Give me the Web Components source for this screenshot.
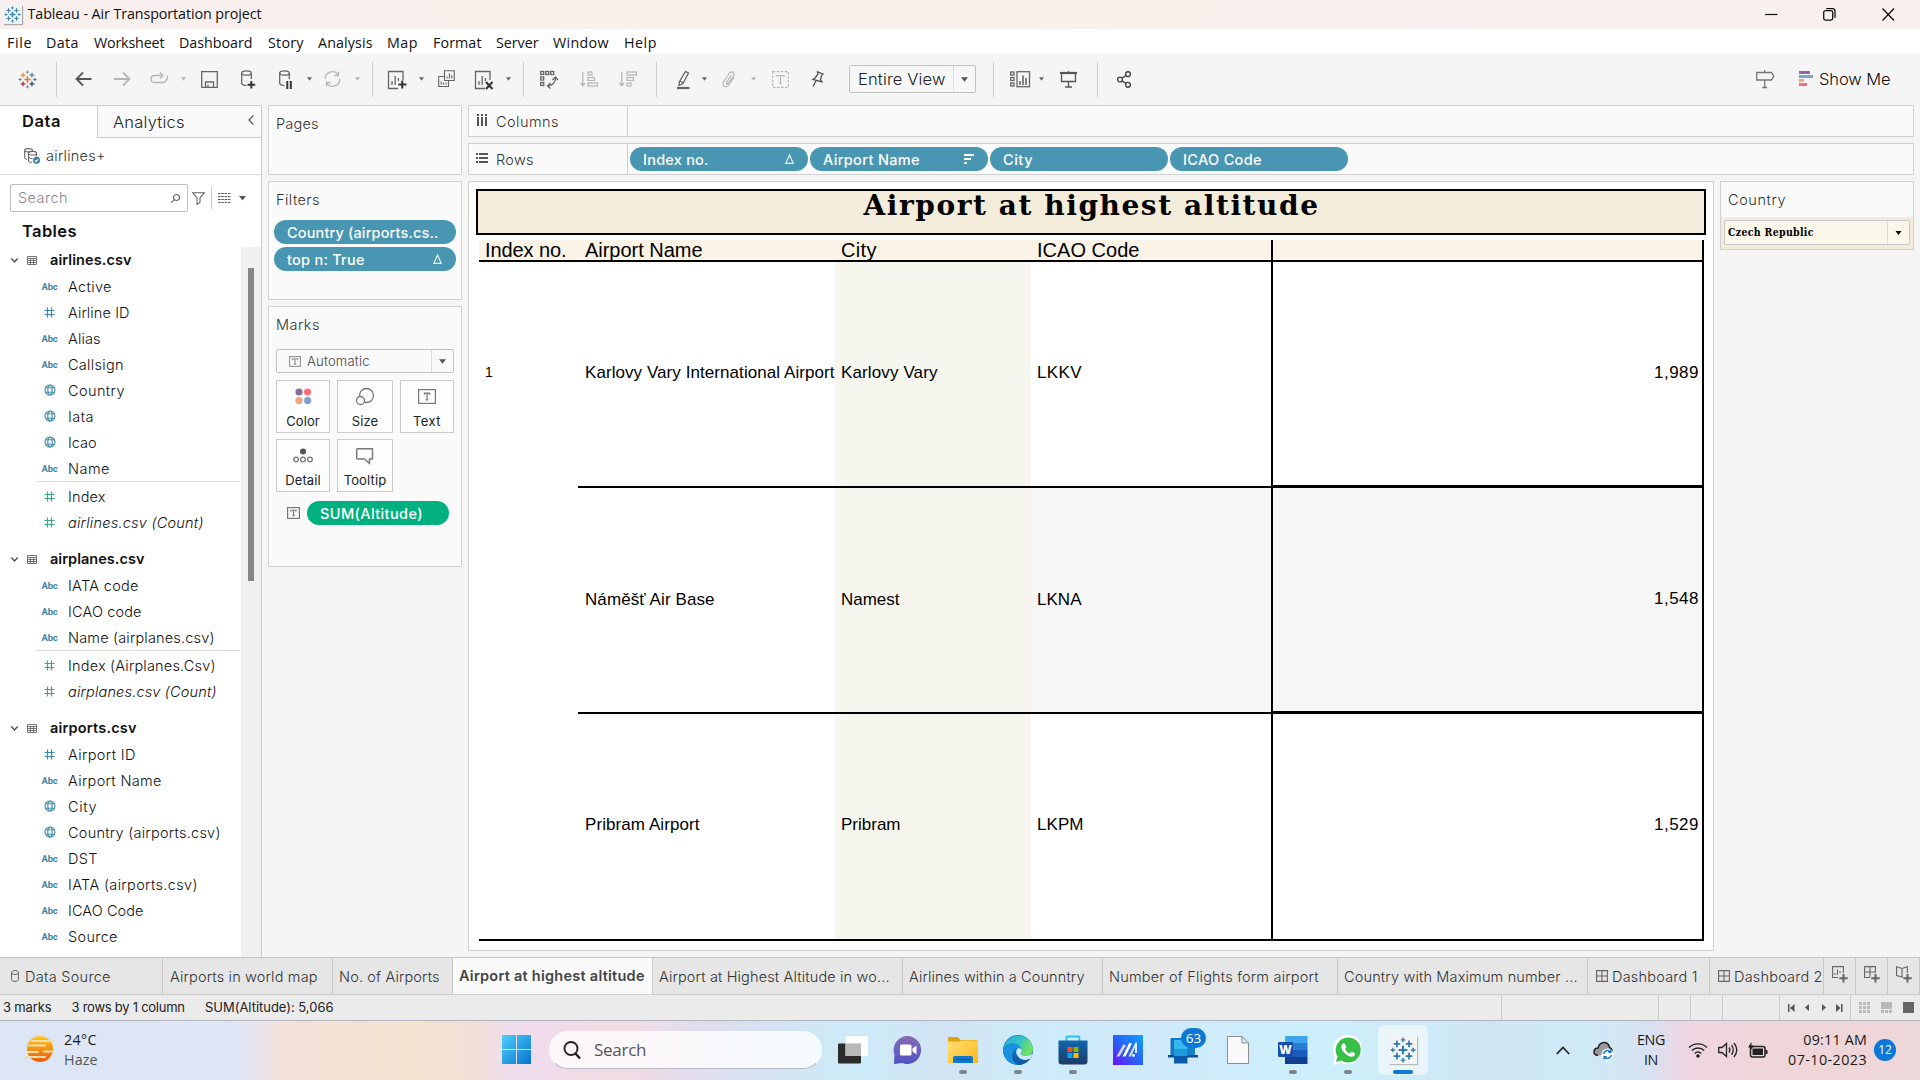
<!DOCTYPE html>
<html lang="en">
<head>
<meta charset="utf-8">
<title>Tableau - Air Transportation project</title>
<style>
html,body{margin:0;padding:0}
body{width:1920px;height:1080px;overflow:hidden;background:#f5f5f5;font-family:Inter,Roboto,"Liberation Sans",sans-serif;color:#222}
</style>
</head>
<body>
<tableau-desktop></tableau-desktop>
<script>
const BASE = `*{box-sizing:border-box}svg{display:block;overflow:visible;flex:none}.row{display:flex;align-items:center}.row>*{flex:none}`;
class UI extends HTMLElement {
  connectedCallback(){
    if(this.shadowRoot) return;
    this.attachShadow({mode:'open'}).innerHTML = `<style>${BASE}${this.css?this.css():''}</style>${this.html()}`;
    if(this.after) this.after();
  }
  a(n,d=''){return this.getAttribute(n)??d}
}
const def=(n,c)=>customElements.define(n,c);

/* A run of text whose tracking is tuned so that it takes up a given width. */
def('fit-text', class extends UI{
  css(){return `:host{display:block;white-space:nowrap;line-height:20px}span{display:inline-block}`}
  html(){return `<span><slot></slot></span>`}
  after(){
    const w=+this.a('w'); if(!w) return;
    const s=this.shadowRoot.querySelector('span'), n=this.textContent.length;
    const nat=s.getBoundingClientRect().width;
    if(nat && n>1) s.style.letterSpacing=((w+1.5-nat)/(n-1)).toFixed(3)+'px';
  }
});
const T=(t,w,st='')=>`<fit-text w="${w}" style="${st}">${t}</fit-text>`;
/* Items are [left edge, width, markup]; each one follows the last in a flex row. */
const flow=(items,start=0)=>{let p=start;return items.map(([x,w,h])=>{const m=x-p;p=x+w;return `<div style="margin-left:${m}px;width:${w}px">${h}</div>`}).join('')};
const svg=(w,h,b,s='#666',sw=1.3)=>`<svg width="${w}" height="${h}" viewBox="0 0 ${w} ${h}" fill="none" stroke="${s}" stroke-width="${sw}">${b}</svg>`;
const plus=(x,y,r,c,sw)=>`<path d="M${x-r} ${y}H${x+r}M${x} ${y-r}V${y+r}" stroke="${c}" stroke-width="${sw}"/>`;
const logo=(s,mono)=>{const c=k=>mono||k;return `<svg width="${s}" height="${s}" viewBox="-9 -9 18 18" fill="none">`+
  plus(0,0,3,c('#e8762d'),1.5)+plus(-4.2,-4.2,2.3,c('#eb912c'),1.2)+plus(4.2,-4.2,2.3,c('#59879b'),1.2)+plus(-4.2,4.2,2.3,c('#c72037'),1.2)+plus(4.2,4.2,2.3,c('#1f447e'),1.2)+
  plus(0,-7,1.6,c('#7199a6'),.9)+plus(0,7,1.6,c('#7a87b0'),.9)+plus(-7,0,1.6,c('#59879b'),.9)+plus(7,0,1.6,c('#5b6591'),.9)+`</svg>`};
const caret=(c='#666',w=6,h=4)=>`<svg width="${w}" height="${h}" viewBox="0 0 6 4"><path d="M0 0H6L3 4Z" fill="${c}"/></svg>`;

def('title-bar', class extends UI{
  css(){return `:host{display:flex;align-items:center;height:29px;background:linear-gradient(90deg,#f8efee 0,#f9f0ee 260px,#faf0ea 45%,#f9f0ee 70%,#f9efee);font-family:"Open Sans",sans-serif;font-size:14.3px;color:#111}.i{width:19px;height:19px;background:#eff3f5;box-shadow:1px 1px 1px #aaa;display:grid;place-items:center}fit-text{margin-top:-1px}`}
  html(){return flow([[3,19,`<div class="i">${logo(17,'#3b85b0')}</div>`],[27.5,240,T('Tableau - Air Transportation project',232.5)],
  [1765,13,svg(13,12,`<path d="M0 5.5H12.5"/>`,'#111',1.2)],
  [1823,13,svg(13,13,`<rect x=".7" y="2.7" width="9" height="9.4" rx="1.8"/><path d="M3.2 .7H9.5Q12 .7 12 3.2V9.8"/>`,'#111',1.3)],
  [1882,12,svg(13,13,`<path d="M.5 .5L12 12.5M12 .5L.5 12.5"/>`,'#111',1.3)]])}
});
def('menu-bar', class extends UI{
  css(){return `:host{display:flex;align-items:center;height:25px;padding-top:2px;background:#fff;font-family:"Open Sans",sans-serif;font-size:14.3px;color:#111}`}
  html(){return flow([['File',8,31],['Data',47,78],['Worksheet',95,164],['Dashboard',180,252],['Story',269,303],['Analysis',319,372],['Map',388,417],['Format',434,481],['Server',497,538],['Window',554,608],['Help',625,656]].map(([t,a,b])=>[a-1,b-a+2,T(t,b-a)]))}
});
const sheetAdd=(x)=>`<path d="M11 18.5H1.5V1.5H16V10"/><path d="M5 15V11M8.2 15V6M11.4 11V8"/>`;
def('tool-bar', class extends UI{
  css(){return `:host{display:flex;align-items:center;height:51px;padding-bottom:1px;background:#f5f5f5}.s{width:1px;height:35px;background:#ccc}.combo{display:flex;height:28px;border:1px solid #c2c2c2;border-radius:2px;background:#f7f7f7;align-items:center;font-size:16.500px;font-weight:300;color:#222}.combo fit-text{width:104px;padding:1px 0 0 8px;border-right:1px solid #ddd;line-height:25px}.combo svg{margin-left:7px}`}
  html(){const S='<div class="s"></div>',L='#b5b5b5';
  return flow([
  [18,19,logo(19)],[56,1,S],
  [75,17,svg(17,16,`<path d="M16.5 8H1.5M8 1.5L1.5 8L8 14.5"/>`,'#555',1.8)],
  [113.500,17,svg(17,16,`<path d="M0 8H15.5M9 1.5L15.5 8L9 14.5"/>`,L,1.8)],
  [150,18,svg(18,14,`<path d="M12 10.5H4.5Q1 10.5 1 7T4.500 3.5H12.500M17.500 3.500Q17.500 10.500 12 10.500M10 .5L13 3.500L10 6.500"/>`,L)],
  [181,5,caret(L,5,4)],
  [201,17,svg(17,17,`<path d="M.7 .7H16.3V16.3H.7Z"/><path d="M4.500 16V11H12.500V16M7 16V13.500"/>`)],
  [241,15,svg(15,19,`<ellipse cx="5.500" cy="3" rx="4.800" ry="2.200"/><path d="M.7 3V13.500Q1.500 15.500 5.500 15.700M10.300 3V9"/><path d="M10.300 11V18.500M6.500 14.700H14.200" stroke="#333" stroke-width="2"/>`)],
  [279,13,svg(13,19,`<ellipse cx="5.500" cy="3" rx="4.800" ry="2.200"/><path d="M.7 3V13.500Q1.500 15.500 5.500 15.700M10.300 3V9"/><path d="M8.300 11V19M11.800 11V19" stroke="#333" stroke-width="2"/>`)],
  [307,5,caret('#666',5,4)],
  [324,17,svg(17,16,`<path d="M1.200 8A7 7 0 0 1 14.200 4.200M15.800 8A7 7 0 0 1 2.800 11.800M14.500 .5V4.500H10.500M2.500 15.500V11.500H6.500"/>`,L)],
  [355,5,caret(L,5,4)],[372,1,S],
  [387,20,svg(20,19,sheetAdd()+`<path d="M15.300 10.500V18.500M11.300 14.500H19.500" stroke="#333" stroke-width="2"/>`)],
  [419,5,caret('#666',5,4)],
  [438,17,svg(17,18,`<path d="M6.500 .7H16.300V10.500H6.500Z"/><path d="M6 6.500H.7V16.500H10.500V11"/><path d="M9 8.500V6.500M11.400 8.500V3.500M13.800 8.500V5M3.200 14.500V11.500M5.500 14.500V12.500M8 14.500V12.500"/>`,'#666',1.1)],
  [474,20,svg(20,19,sheetAdd()+`<path d="M12 12L18.500 19M18.500 12L12 19" stroke="#333" stroke-width="2"/>`)],
  [506,5,caret('#666',5,4)],[523,1,S],
  [540,18,svg(18,19,`<rect x=".7" y="1.500" width="3" height="3"/><rect x="5.700" y="1.500" width="3" height="3"/><rect x="10.700" y="1.500" width="3" height="3"/><rect x=".7" y="7" width="3" height="3"/><rect x=".7" y="12.500" width="3" height="3"/><path d="M7.500 16Q15.500 15 15.500 8M12.500 10L15.500 7L18 10M10.500 13L7.500 16L10.500 18.500"/>`)],
  [580,18,svg(18,16,`<path d="M2.800 1V14.500M.5 12L2.800 14.700L5 12"/><rect x="8" y="1" width="4" height="3"/><rect x="8" y="6.500" width="6.500" height="3"/><rect x="8" y="12" width="9.500" height="3"/>`,L,1.2)],
  [619,18,svg(18,16,`<path d="M2.800 1V14.500M.5 12L2.800 14.700L5 12"/><rect x="8" y="1" width="9.500" height="3"/><rect x="8" y="6.500" width="6.500" height="3"/><rect x="8" y="12" width="4" height="3"/>`,L,1.2)],
  [656,1,S],
  [677,13,svg(13,19,`<path d="M8.500 1.500L11.500 3L6 13.500L2 15.500L2.500 11.500ZM3 11L6.500 13"/><path d="M0 18H12.500" stroke-width="2.200"/>`)],
  [702,5,caret('#666',5,4)],
  [722,14,svg(14,17,`<path d="M9.500 4L4.500 11.500Q4 13.500 5.500 13.300L11.500 5Q13 1.500 10 .8Q8.500 .6 7.500 2L1.500 11Q0 15 3.500 16Q5.500 16 6.500 14.500L12 6.500"/>`,L,1.2)],
  [751,5,caret(L,5,4)],
  [772,17,svg(17,17,`<rect x=".7" y=".7" width="15.600" height="15.600" stroke-dasharray="2.500 1.500"/><path d="M5 6V4.500H12V6M8.500 4.500V12.500M7 12.500H10"/>`,L,1.200)],
  [811,13,svg(13,17,`<path d="M6.500 .8L12 3L10.500 4.500L9.500 8.500L11 11L2 8.500L4.500 6.500L7 3ZM5 9.800L2 15.500"/>`,'#555')],
  [849,127,`<div class="combo">${T('Entire View',86)}${caret('#555',7,5)}</div>`],
  [993,1,S],
  [1010,20,svg(20,17,`<rect x=".7" y="1" width="3.300" height="3"/><rect x=".7" y="6.500" width="3.300" height="3"/><rect x=".7" y="12" width="3.300" height="3"/><rect x="7" y=".7" width="12.500" height="15"/><path d="M10 14V10M13 14V4.500M16 14V7" stroke-width="1.600"/>`)],
  [1039,5,caret('#666',5,4)],
  [1060,17,svg(17,17,`<path d="M0 2H17" stroke-width="2.200"/><path d="M1.500 2V10.500H15.500V2M8.500 0V2M8.500 10.500V16M5 16H12"/>`,'#555')],
  [1097,1,S],
  [1117,15,svg(15,17,`<circle cx="3" cy="8.500" r="2.400"/><circle cx="11" cy="3.200" r="2.400"/><circle cx="11" cy="13.800" r="2.400"/><path d="M5.200 7L8.900 4.600M5.200 10L8.900 12.300"/>`,'#444',1.4)],
  [1756,19,svg(19,18,`<path d="M.7 2.500H15.500L17.800 6.200L15.500 10H.7ZM8.700 0V2.500M8.700 10V17.500M6.200 17.500H11.200"/>`,'#777')],
  [1799,14,`<svg width="14" height="16"><path fill="#8a6d9a" d="M0 0H11V3H0Z"/><path fill="#7ba6d0" d="M0 4H14V7H0Z"/><path fill="#f0a582" d="M0 8H5V11H0Z"/><path fill="#f5707c" d="M0 12H8V15H0Z"/></svg>`],
  [1819,76,T('Show Me',70,'font-size:16.500px;font-weight:300;color:#111')]])}
});

const ICON={
  abc:`<span style="font:700 9.500px Roboto;color:#3f85a4;letter-spacing:-.2px">Abc</span>`,
  num:c=>svg(11,11,`<path d="M3.500 .5V10.500M7.500 .5V10.500M.5 3.500H10.500M.5 7.500H10.500"/>`,c,1.2),
  geo:svg(12,12,`<circle cx="6" cy="6" r="5"/><ellipse cx="6" cy="6" rx="2.200" ry="5"/><path d="M1.500 3.800H10.500M1.500 8.200H10.500"/>`,'#3f8aa8',1.1)};
def('data-field', class extends UI{
  css(){return `:host{display:flex;align-items:center;height:26px;font-size:14.500px;font-weight:300;color:#111}.i{width:27px;margin-left:36px;display:grid;place-items:center}fit-text{margin-left:5px;line-height:26px;padding-top:1px}:host([count]) fit-text{font-style:italic}`}
  html(){const k=this.a('kind');return `<div class="i">${k=='abc'?ICON.abc:k=='geo'?ICON.geo:ICON.num(k=='num'?'#3f8aa8':'#3fa58c')}</div>${T(this.a('name'),this.a('w'))}`}
});
def('data-table', class extends UI{
  css(){return `:host{display:block;margin-bottom:10px}.h{display:flex;align-items:center;height:26px;font-size:14.500px;font-weight:600;color:#111;padding-left:11px}hr{margin:0 0 1px 36px;border:0;height:1px;background:#dcdcdc}.ms{padding-bottom:1px}`}
  html(){const d=TABLES[+this.a('i')];const f=([k,n,w,c])=>`<data-field kind="${k}" name="${n}" w="${w}" ${c?'count':''}></data-field>`;
  return `<div class="h">${svg(7,5,`<path d="M.3 .5L3.500 4L6.700 .5"/>`,'#555',1.500)}<div style="width:9px"></div>${svg(10,9,`<path d="M.5 .5H9.500V8.500H.5ZM.5 2.500H9.500M.5 4.500H9.500M.5 6.500H9.500M3.500 2.500V8.500M6.500 2.500V8.500"/>`,'#666',.9)}<div style="width:13px"></div>${T(d.n,d.w)}</div>${d.f.map(f).join('')}${d.m?'<hr><div class="ms">'+d.m.map(f).join('')+'</div>':''}`}
});
const TABLES=[
 {n:'airlines.csv',w:80,f:[['abc','Active',42],['num','Airline ID',60],['abc','Alias',31],['abc','Callsign',54],['geo','Country',55],['geo','Iata',24],['geo','Icao',27],['abc','Name',40]],m:[['meas','Index',36],['meas','airlines.csv (Count)',134,1]]},
 {n:'airplanes.csv',w:93,f:[['abc','IATA code',69],['abc','ICAO code',72],['abc','Name (airplanes.csv)',145]],m:[['meas','Index (Airplanes.Csv)',146],['meas','airplanes.csv (Count)',147,1]]},
 {n:'airports.csv',w:85,f:[['num','Airport ID',66],['abc','Airport Name',92],['geo','City',27],['geo','Country (airports.csv)',151],['abc','DST',28],['abc','IATA (airports.csv)',128],['abc','ICAO Code',74],['abc','Source',48]]}];
def('data-pane', class extends UI{
  css(){return `:host{display:flex;flex-direction:column;width:262px;height:852px;background:#fff;border-top:1px solid #ccc;border-right:1px solid #ccc}
  .tabs{display:flex;height:32px;font-size:16.500px}.d{width:97px;padding:5px 0 0 22px;font-weight:600;color:#111}.an{flex:1;display:flex;border-left:1px solid #ccc;border-bottom:1px solid #ccc;background:#fafafa;padding:6px 7px 0 15px;justify-content:space-between;color:#222;font-weight:300}.an svg{margin-top:3px}
  .src{display:flex;align-items:center;height:37px;border-bottom:1px solid #dcdcdc;padding-left:24px;gap:6px;font-size:14.500px;font-weight:300;color:#333}
  .sr{display:flex;align-items:center;padding:9px 0 0 10px}.box{width:178px;height:28px;border:1px solid #bdbdbd;border-radius:2px;display:flex;align-items:center;justify-content:space-between;padding:0 7px;font-size:14.500px;font-weight:300;color:#888}
  .tb{font-size:16.500px;font-weight:600;color:#111;padding:9px 0 6px 22px;height:35px;margin-top:0}
  .list{display:flex;flex:1;overflow:hidden}.items{width:241px;}.track{width:20px;background:#f0f0f0;padding-top:21px}.th{width:6px;height:313px;margin-left:7px;background:#868686}data-table{width:240px}`}
  html(){return `<div class="tabs"><div class="d">${T('Data',37)}</div><div class="an">${T('Analytics',70)}${svg(6,10,`<path d="M5.500 .5L1 5L5.500 9.500"/>`,'#555',1.300)}</div></div>
  <div class="src">${svg(16,16,`<path d="M3 11.500Q.7 11 .7 9.500V2.500M8.500 2.500V3.500"/><ellipse cx="4.600" cy="2.300" rx="3.900" ry="1.700"/><ellipse cx="8.500" cy="5.200" rx="4" ry="1.800"/><path d="M4.500 5.200V13Q5.500 14.500 8 14.500M12.500 5.200V8.500M4.500 9Q6 10.700 8.500 10.700"/><circle cx="12.500" cy="12.300" r="3.500" fill="#3a7fa3" stroke="none"/><path d="M10.800 12.300L12.100 13.500L14.200 11.300" stroke="#fff"/>`,'#666',1.100)}${T('airlines+',58)}</div>
  <div class="sr"><div class="box">${T('Search',48)}${svg(9,9,`<circle cx="5.500" cy="3.500" r="3"/><path d="M3.300 5.700L.3 8.700"/>`,'#666',1.200)}</div>
  ${flow([[192,13,svg(13,13,`<path d="M.7 .7H12.300L8 6V10.500L5 12.300V6Z"/>`,'#666',1.100)],[211,1,'<div style="height:22px;background:#ccc"></div>'],[218,13,svg(13,10,`<path d="M0 .5H12.500M0 3.500H12.500M0 6.500H12.500M0 9.500H12.500" stroke-dasharray="2.500 .8"/>`,'#555',1.200)],[239,7,caret('#555',7,4.500)]],188)}</div>
  <div class="tb">${T('Tables',53)}</div>
  <div class="list"><div class="items">${[0,1,2].map(i=>`<data-table i="${i}"></data-table>`).join('')}</div><div class="track"><div class="th"></div></div></div>`}
});

const DELTA=svg(9,10,`<path d="M4.500 1L8.200 9.300H.8Z"/>`,'#e6f1f5',1.200);
def('field-pill', class extends UI{
  css(){return `:host{display:flex;align-items:center;justify-content:space-between;height:24px;border-radius:12px;background:var(--pill,#4996b2);color:#fff;font-size:14.500px;font-weight:500;padding:0 14px 0 13px}fit-text{line-height:24px;padding-top:1px}`}
  html(){return T(this.a('label'),this.a('w'))+(this.a('mark')=='delta'?DELTA:this.a('mark')=='sort'?`<svg width="10" height="10"><path fill="#fff" d="M0 0H10V2H0ZM0 4H7V6H0ZM0 8H3V10H0Z"/></svg>`:'')}
});
def('side-card', class extends UI{
  css(){return `:host{display:block;width:194px;border:1px solid #d0d0d0;background:#fafafa}h3{margin:0;padding:8px 0 0 7px;font-size:14.500px;font-weight:300;color:#333}`}
  html(){return `<h3>${T(this.a('title'),this.a('w'))}</h3><slot></slot>`}
});
const TBOX=(w,h,c='#777')=>svg(w,h,`<rect x=".6" y=".6" width="${w-1.2}" height="${h-1.2}"/><path d="M${w/2-2.600} ${h*.38}V${h*.27}H${w/2+2.600}V${h*.38}M${w/2} ${h*.27}V${h*.73}M${w/2-1.300} ${h*.73}H${w/2+1.300}"/>`,c,1.200);
def('mark-button', class extends UI{
  css(){return `:host{display:flex;flex-direction:column;align-items:center;height:53px;border:1px solid #ccc;background:#fdfdfd;font-size:13px;font-weight:400;color:#222}.i{height:30px;display:grid;place-items:center;padding-top:1px}`}
  html(){return `<div class="i"><slot></slot></div>${T(this.a('label'),this.a('w'))}`}
});
def('cards-column', class extends UI{
  css(){return `:host{display:flex;flex-direction:column;gap:6px;width:194px}.p{display:grid;gap:3px;margin:10px 5px 0 5px}.combo{display:flex;align-items:center;margin:14px 7px 7px;height:24px;border:1px solid #c4c4c4;border-radius:2px;font-size:13px;color:#444;font-weight:300;padding-left:12px;gap:6px}.combo fit-text{flex:1}.combo .c{width:22px;height:22px;border-left:1px solid #ddd;display:grid;place-items:center}.g{display:grid;grid-template-columns:54px 56px 54px;gap:6px 7px;margin-left:7px}.s{display:flex;align-items:center;gap:7px;margin:9px 0 0 18px}.s field-pill{width:142px;--pill:#00b180}`}
  html(){return `<side-card title="Pages" w="41" style="height:70px"></side-card>
  <side-card title="Filters" w="42" style="height:119px"><div class="p"><field-pill label="Country (airports.cs.." w="150"></field-pill><field-pill label="top n: True" w="76" mark="delta"></field-pill></div></side-card>
  <side-card title="Marks" w="42" style="height:261px"><div class="combo">${TBOX(12,11,'#999')}${T('Automatic',61)}<div class="c">${caret('#555',7,5)}</div></div>
  <div class="g">
  <mark-button label="Color" w="32"><svg width="17" height="17"><circle cx="4" cy="4" r="3.600" fill="#8a6d9a"/><circle cx="12.600" cy="4" r="3.600" fill="#f9707e"/><circle cx="4" cy="12.600" r="3.600" fill="#f2a57c"/><circle cx="12.600" cy="12.600" r="3.600" fill="#7ba2cc"/></svg></mark-button>
  <mark-button label="Size" w="25">${svg(18,17,`<circle cx="10.500" cy="7.500" r="7"/><circle cx="4.500" cy="12.500" r="4" fill="#fdfdfd"/>`,'#777')}</mark-button>
  <mark-button label="Text" w="26">${TBOX(18,15)}</mark-button>
  <mark-button label="Detail" w="34">${svg(20,15,`<circle cx="10" cy="3.500" r="3" fill="#555" stroke="none"/><circle cx="3" cy="11.500" r="2.300"/><circle cx="10" cy="11.500" r="2.300"/><circle cx="17" cy="11.500" r="2.300"/>`,'#777')}</mark-button>
  <mark-button label="Tooltip" w="41">${svg(18,16,`<path d="M1.500 .7H16.500V11H13.500V15.500L8.500 11H1.500Q.7 11 .7 10V1.500Q.7 .7 1.500 .7Z"/>`,'#777',1.400)}</mark-button></div>
  <div class="s">${TBOX(13,12)}<field-pill label="SUM(Altitude)" w="101"></field-pill></div></side-card>`}
});
def('field-shelf', class extends UI{
  css(){return `:host{display:flex;align-items:center;height:32px;width:1446px;border:1px solid #d0d0d0;background:#fafafa;font-size:14.500px;font-weight:300;color:#333}.l{width:159px;height:30px;display:flex;align-items:center;padding-left:7px;gap:8px;border-right:1px solid #d0d0d0;padding-top:2px}.l svg{margin-top:-5px}::slotted(field-pill){width:178px}.p{display:flex;gap:2px;padding-left:2px}`}
  html(){const c=this.a('kind')=='c';return `<div class="l">${c?`<svg width="12" height="12"><path fill="#555" d="M1 0H3V2H1ZM5 0H7V2H5ZM9 0H11V2H9ZM1 3H3V12H1ZM5 3H7V12H5ZM9 3H11V12H9Z"/></svg>`:`<svg width="12" height="10"><path fill="#555" d="M0 0H2V2H0ZM0 4H2V6H0ZM0 8H2V10H0ZM3 0H12V2H3ZM3 4H12V6H3ZM3 8H12V10H3Z"/></svg>`}${T(c?'Columns':'Rows',c?61:36)}</div><div class="p"><slot></slot></div>`}
});
def('crosstab-view', class extends UI{
  css(){return `:host{display:flex;flex-direction:column;width:1246px;height:770px;border:1px solid #d0d0d0;background:#fff;padding:7px 0 0 7px;font-family:"Liberation Sans",Arial,sans-serif;color:#000}
  .t{width:1230px;height:46px;border:2px solid #000;background:#f4ecda;display:flex;justify-content:center;font:700 28px "DejaVu Serif",serif}.t fit-text{line-height:28px;margin:1px 0 0 1px}
  .g{margin:5px 0 0 3px;width:1225px;display:grid;grid-template-columns:99px 257px 196px 240px 433px;grid-template-rows:22px 226px 226px 227px;font-size:17px}
  .g>div{display:flex;align-items:flex-start;padding:101px 0 0 6px;border-bottom:2px solid #000}.g>.nm{padding-left:7px}.g>.b2{padding-top:102px}
  .g>.h{background:#faf3e6;font-size:20px;padding-top:0;padding-bottom:0;align-items:flex-end}.g>.h fit-text{line-height:20px}
  .g>.v{justify-content:flex-end;border-left:2px solid #000;border-right:2px solid #000;padding-left:0;padding-right:3px;border-bottom-width:3px}
  .g>.h.v{border-bottom-width:2px}.g>.last{border-bottom-width:2px}.city{background:#f6f6ee}.b{background:#f6f6f7}.g>.idx{grid-row:2/5;padding-top:102px;font-size:14px}`}
  html(){const r=(n,wn,c,wc,i,wi,v,k)=>{const p=k=='b'?'b2':'';return `<div class="nm ${p}">${T(n,wn)}</div><div class="city ${p}">${T(c,wc)}</div><div class="${k} ${p}">${T(i,wi)}</div><div class="v ${k}">${T(v,43)}</div>`};
  return `<div class="t">${T('Airport at highest altitude',453)}</div><div class="g">
  <div class="h">${T('Index no.',80)}</div><div class="h nm">${T('Airport Name',116)}</div><div class="h">${T('City',34)}</div><div class="h">${T('ICAO Code',101)}</div><div class="h v"></div>
  <div class="idx">1</div>
  ${r('Karlovy Vary International Airport',248,'Karlovy Vary',95,'LKKV',43,'1,989','')}
  ${r('Náměšť Air Base',128,'Namest',57,'LKNA',43,'1,548','b')}
  ${r('Pribram Airport',113,'Pribram',58,'LKPM',45,'1,529','last')}</div>`}
});
def('filter-card', class extends UI{
  css(){return `:host{display:block;width:194px;height:69px;border:1px solid #d0d0d0;background:#fafafa;font-size:14.500px;font-weight:300;color:#333}.n{height:35px;padding:8px 0 0 7px}.b{height:32px;background:#f4ecda;padding:3px 3px}.c{height:25px;border:1px solid #c8c8c8;border-radius:2px;background:#faf6ea;display:flex;align-items:center;font:700 10.500px "DejaVu Serif Condensed","DejaVu Serif",serif;color:#000}.c fit-text{flex:1;padding:0 0 1px 3px}.c .k{width:22px;height:23px;border-left:1px solid #ddd;display:grid;place-items:center}`}
  html(){return `<div class="n">${T('Country',56)}</div><div class="b"><div class="c">${T('Czech Republic',84)}<div class="k">${caret('#000',7,4)}</div></div></div>`}
});
const GRIDI=svg(12,12,`<path d="M.6 .6H11.400V11.400H.6ZM6 .6V11.400M.6 6H11.400"/>`,'#666',1.100);
def('sheet-tabs', class extends UI{
  css(){return `:host{display:flex;height:38px;border-top:1px solid #c4c4c4;border-bottom:1px solid #ccc;background:#e6e6e6;font-size:14.500px;font-weight:300;color:#333}.t{display:flex;align-items:center;border-right:1px solid #c8c8c8;height:36px;padding-left:6px;gap:5px;padding-top:2px;flex:none;overflow:hidden}.t.a{background:#fafafa;font-weight:600;color:#444;padding-top:0;padding-bottom:1px}.n{justify-content:center;padding:0}.ds{gap:6px}.t svg{margin-top:-3px}`}
  html(){const x=[0,163,333,453,653,903,1103,1338,1588,1710,1824,1856,1888,1920];
  const n=b=>svg(16,17,b+`<path d="M11.500 8V16.500M7.300 12.300H15.700" stroke="#666" stroke-width="2"/>`,'#666',1.100);
  const c=[`${svg(8,12,`<ellipse cx="4" cy="2.500" rx="3.500" ry="2"/><path d="M.5 2.500V9.500Q.8 11.300 4 11.500Q7.200 11.300 7.500 9.500V2.500"/>`,'#666',1)}${T('Data Source',84)}`,T('Airports in world map',146),T('No. of Airports',99),T('Airport at highest altitude',184),T('Airport at Highest Altitude in wo...',229),T('Airlines within a Counntry',174),T('Number of Flights form airport',208),T('Country with Maximum number ...',232),GRIDI+T('Dashboard 1',84),GRIDI+T('Dashboard 2',87),
  n(`<path d="M6 11.500H.6V.6H11.400V7M3 9V7M5.500 9V3.500M8 7V5"/>`),n(`<path d="M6 11.500H.6V.6H11.400V7M6 .6V11M.6 6H11.400"/>`),n(`<path d="M6 11L.6 9.500V.8L6 2.500L11.400 .8V7M6 2.500V12"/>`)];
  return c.map((h,i)=>`<div class="t ${i==3?'a':''} ${i==0?'ds':''} ${i>9?'n':''}" style="width:${x[i+1]-x[i]}px;${i==1?'padding-left:7px;':''}${i==8||i==9?'padding-left:8px;gap:4px':''}${i==0?'padding-left:11px':''}">${h}</div>`).join('')}
});
def('status-bar', class extends UI{
  css(){return `:host{display:flex;align-items:center;height:26px;background:#ebebeb;border-bottom:1px solid #b2b5be;font-size:13px;font-weight:400;color:#222}.s{width:1px;height:25px;background:#ccc}fit-text{margin-top:-1px}`}
  html(){const S='<div class="s"></div>';const g='#b9b9b9';
  return flow([[3,52,T('3 marks',47)],[71.500,115,T('3 rows by 1 column',112)],[205,130,T('SUM(Altitude): 5,066',127)],[1501,1,S],[1658,1,S],[1690,1,S],[1722,1,S],[1779,1,S],
  [1788,7,`<svg width="7" height="8"><path fill="#555" d="M0 0H1.500V8H0ZM6.500 0V8L2 4Z"/></svg>`],[1805,4,`<svg width="4" height="7"><path fill="#555" d="M4 0V7L0 3.500Z"/></svg>`],[1821.500,4,`<svg width="4" height="7"><path fill="#555" d="M0 0V7L4 3.500Z"/></svg>`],[1836,7,`<svg width="7" height="8"><path fill="#555" d="M5 0H6.500V8H5ZM0 0V8L4.500 4Z"/></svg>`],
  [1850,1,S],[1859,11,`<svg width="11" height="11"><path fill="${g}" d="M0 0H3V3H0ZM4 0H7V3H4ZM8 0H11V3H8ZM0 4H3V7H0ZM4 4H7V7H4ZM8 4H11V7H8ZM0 8H3V11H0ZM4 8H7V11H4ZM8 8H11V11H8Z"/></svg>`],[1881,11,`<svg width="11" height="11"><path fill="${g}" d="M0 0H11V7H0ZM0 8H3V11H0ZM4 8H7V11H4ZM8 8H11V11H8Z"/></svg>`],[1903,11,`<svg width="11" height="11"><path fill="#666" d="M0 0H11V11H0Z"/></svg>`]])}
});
const I30=(b)=>`<svg width="30" height="30" viewBox="0 0 30 30">${b}</svg>`;
const APPS={
 win:I30(`<defs><linearGradient id="w" x1="0" y1="0" x2="1" y2="1"><stop stop-color="#4fd0fb"/><stop offset="1" stop-color="#0573d2"/></linearGradient></defs><path fill="url(#w)" d="M0 0H14V14H0ZM15 0H29V14H15ZM0 15H14V29H0ZM15 15H29V29H15Z"/>`),
 task:I30(`<rect x="0" y="8.500" width="23" height="20" rx="1" fill="#2b2b2b"/><rect x="7.500" y="1" width="22.500" height="20" rx="1" fill="#fff" opacity=".92"/><rect x="7.500" y="8.500" width="15.500" height="12.500" fill="#b9b9b9"/>`),
 chat:I30(`<defs><linearGradient id="c" x1="0" y1="0" x2="0" y2="1"><stop stop-color="#8a68b0"/><stop offset=".5" stop-color="#6a62c4"/><stop offset="1" stop-color="#5050c0"/></linearGradient></defs><path fill="url(#c)" d="M15 1A14 14 0 1 1 9 28L1 29L1.500 20A14 14 0 0 1 15 1Z"/><rect x="7" y="9.500" width="11.500" height="11" rx="1.500" fill="#fff"/><path fill="#fff" d="M19.500 13.500L23.500 10.500V19.500L19.500 16.500Z"/>`),
 files:I30(`<defs><linearGradient id="f" x1="0" y1="0" x2="1" y2="1"><stop stop-color="#ffdf76"/><stop offset="1" stop-color="#fbb91a"/></linearGradient></defs><path fill="#e19f0c" d="M0 3Q0 2 1 2H9.500L12.500 5H29Q30 5 30 6V12H0Z"/><path fill="url(#f)" d="M0 6.500H11L13.500 5.500H29Q30 5.500 30 6.500V28H0Z"/><path fill="#1278c9" d="M5 28V23Q5 21 7 21H23Q25 21 25 23V28Z"/><path stroke="#0a4f8f" d="M8 24.500H22"/>`),
 edge:I30(`<defs><linearGradient id="e1" x1="0" y1="0" x2="1" y2=".3"><stop stop-color="#2aa8e0"/><stop offset=".6" stop-color="#34c6c4"/><stop offset="1" stop-color="#6ee35a"/></linearGradient><linearGradient id="e2" x1="0" y1="0" x2="0" y2="1"><stop stop-color="#1686dc"/><stop offset="1" stop-color="#0b57a8"/></linearGradient></defs><circle cx="15" cy="15" r="15" fill="url(#e2)"/><path fill="url(#e1)" d="M1.200 10A15 15 0 0 1 30 14.500Q29.500 20.500 22.500 20.500Q17.500 20.500 17.500 18.500Q19 17 18.500 14Q16.500 9 10 8.500Q4 8.500 0 14Z"/><path fill="#1a90e0" d="M0 14Q4 8.500 10 8.500Q16.500 9 18.500 14Q14 11 10.500 16Q8.500 23 16.500 29.800A15 15 0 0 1 0 14Z"/><path fill="#cdeaf7" d="M18.500 14Q19.500 17 17.500 18.500Q17.500 20.500 22 20.800Q26 20.800 29.500 18.500Q28.500 22 27 24Q18 27 14 20Q12 15.500 15 13Z"/><path fill="#0f5ea8" d="M10.500 16Q9.500 22 15.500 25Q21 27 27.300 23.500Q22.500 30.500 15 30Q7 26 10.500 16Z"/>`),
 store:I30(`<defs><linearGradient id="s" x1="0" y1="0" x2="0" y2="1"><stop stop-color="#0f67ae"/><stop offset="1" stop-color="#1d3a66"/></linearGradient></defs><path fill="none" stroke="#2bbdf2" stroke-width="1.800" d="M8.500 6V2.500Q8.500 1.500 9.500 1.500H20.500Q21.500 1.500 21.500 2.500V6"/><path fill="url(#s)" d="M.5 5.500H29.500V26Q29.500 29.500 26 29.500H4Q.5 29.500 .5 26Z"/><path fill="#f25022" d="M9.500 12H14.500V17H9.500Z"/><path fill="#7fba00" d="M15.500 12H20.500V17H15.500Z"/><path fill="#00a4ef" d="M9.500 18H14.500V23H9.500Z"/><path fill="#ffb900" d="M15.500 18H20.500V23H15.500Z"/>`),
 asus:I30(`<defs><linearGradient id="m" x1="1" y1="0" x2="0" y2="1"><stop stop-color="#0aa5ff"/><stop offset=".55" stop-color="#2b5cf5"/><stop offset="1" stop-color="#6a10f0"/></linearGradient></defs><path fill="url(#m)" d="M0 0H30V30H0Z"/><path fill="#fff" opacity=".75" d="M3.500 21.500L10.500 9L13 10.500L6.500 21.500Z"/><path fill="#fff" d="M9.500 21.500L16.500 7.500L18.500 8.500V9.500L12.500 21.500Z"/><path fill="#fff" opacity=".85" d="M15.500 21.500L22.500 7.500H24V18H22V12.500L17.800 21.500Z"/><circle cx="20.500" cy="20.500" r="1.400" fill="#fff"/>`),
 phone:I30(`<path fill="#1276c4" d="M2.500 3H20V20H2.500Z"/><path fill="#0a4f96" d="M0 20H30V22.500H0Z"/><path fill="#1582d0" d="M20 12H27V20H20Z"/><path fill="#35b8ee" d="M6 5H19.500V14H6Z"/><path fill="#1f98dc" d="M6 14H19.500V21H6Z"/><path fill="#0b5ca8" d="M6 21H19.500V28.500H6Z"/>`),
 doc:`<svg width="22" height="28" viewBox="0 0 22 28"><path fill="#fafafa" stroke="#8d8d8d" d="M.5 .5H15L21.500 7V27.500H.5ZM15 .5V7H21.500"/></svg>`,
 word:I30(`<path fill="#41a5ee" d="M7 1H29.500V8H7Z"/><path fill="#2b7cd3" d="M7 8H29.500V15H7Z"/><path fill="#185abd" d="M7 15H29.500V22H7Z"/><path fill="#103f91" d="M7 22H29.500V29H7Z"/><rect y="7" width="15" height="15" rx="1" fill="#1850a8"/><text x="7.500" y="19" text-anchor="middle" font-family="Open Sans" font-weight="800" font-size="12" fill="#fff">W</text>`),
 wa:I30(`<path fill="#fff" d="M15 0A14.700 14.700 0 1 1 8 27.800L0 30L2 22A14.700 14.700 0 0 1 15 0Z"/><path fill="#38bf48" d="M15 2.500A12.500 12.500 0 1 1 8.500 25.500L3 27L4.500 21.500A12.500 12.500 0 0 1 15 2.500Z"/><path fill="#fff" d="M10.500 8.200Q11.500 8 12 9L13.300 12Q13.200 13 12 14Q13.500 17.300 17 18.500L18.500 16.800Q19 16.500 22 18.200Q22.500 19.500 21 21Q18 23 13 19.500Q8 15 8.300 11Q8.800 9 10.500 8.200Z"/>`)
};
def('task-app', class extends UI{
  css(){return `:host{display:flex;flex-direction:column;align-items:center;width:48px;height:48px;padding-top:9px;border-radius:4px;position:relative}:host([active]){background:rgba(255,255,255,.55);box-shadow:0 0 0 1px rgba(255,255,255,.4)}.i{height:30px;display:grid;place-items:center}.d{margin-top:5px;width:8px;height:4px;border-radius:2px;background:#7c858b}:host([active]) .d{width:20px;background:#0a78d4}.b{position:absolute;left:22px;top:2px;min-width:25px;height:20px;border-radius:10px;background:#0a78d4;color:#fff;font:13.500px/20px "Open Sans",sans-serif;text-align:center}.tile{width:28px;height:28px;background:#f3f4f5;box-shadow:1px 1px 1px #bbb;display:grid;place-items:center}`}
  html(){const k=this.a('app');return `<div class="i">${k=='tab'?`<div class="tile">${logo(26,'#2f7ba8')}</div>`:APPS[k]}</div>${this.hasAttribute('open')?'<div class="d"></div>':''}${this.a('badge')?`<div class="b">${this.a('badge')}</div>`:''}`}
});
def('task-bar', class extends UI{
  css(){return `:host{display:flex;align-items:center;height:59px;padding-bottom:1px;font-family:"Open Sans",sans-serif;font-size:14.300px;color:#1a1a1a;background:linear-gradient(90deg,#dde6f4 0,#dfe6f7 235px,#f3e1da 285px,#f3e3d0 410px,#f1e0d6 470px,#eedcee 515px,#f3dbe1 620px,#e3deee 690px,#d5e3f2 770px,#cdebf8 855px,#d2e4f4 945px,#cdecf9 1040px,#d0e9fb 1130px,#cceffa 1330px,#d0e6f5 1490px,#cfeaf7 1580px,#d8e2f2 1650px,#eed5e2 1685px,#efd6d9 1760px,#eed7d8 1920px)}
  .st{display:flex;flex-direction:column;margin-top:-1px}.c{align-items:center}.r{align-items:flex-end}.sb{height:38px;border-radius:19px;background:rgba(255,255,255,.78);border:1px solid rgba(255,255,255,.3);border-bottom:1px solid #b9bac5;display:flex;align-items:center;padding-left:13px;gap:13px;font-size:17px;color:#555}.bd{width:22px;height:22px;border-radius:11px;background:#0a78d4;color:#fff;text-align:center;font-size:12px;line-height:22px}`}
  html(){const A=(x,app,ex='')=>[x-24,48,`<task-app app="${app}" ${ex}></task-app>`];
  return flow([
  [25,30,`<div style="margin-top:-2px">${svg(30,28,`<defs><linearGradient id="h" x1="0" y1="0" x2="0" y2="1"><stop stop-color="#ffc91a"/><stop offset="1" stop-color="#e8590a"/></linearGradient></defs><circle cx="15" cy="14" r="13" fill="url(#h)" stroke="none"/><path d="M7 6H29M4 10.500H20M1 17H13M19 16.500H27M0 22H20" stroke="#f1dfb4" stroke-width="2.200" stroke-linecap="round"/>`)}</div>`],
  [64,60,`<div class="st">${T('24°C',31)}${T('Haze',32,'color:#555')}</div>`],
  [502,30,APPS.win],
  [549,273,`<div class="sb">${svg(18,18,`<circle cx="8" cy="7.500" r="6.500"/><path d="M12.500 12.500L17 17.500" stroke-width="2.500"/>`,'#222',1.900)}${T('Search',51)}</div>`],
  A(853,'task'),A(908,'chat'),A(963,'files','open'),A(1018,'edge','open'),A(1073,'store','open'),A(1128,'asus'),A(1183,'phone','badge="63"'),A(1238,'doc'),A(1293,'word','open'),A(1348,'wa','open'),A(1403,'tab','open active'),
  [1556,14,svg(14,9,`<path d="M.8 8L7 1.500L13.200 8"/>`,'#222',1.700)],
  [1593,21,svg(21,19,`<path d="M5 14.500Q.8 14 1 10.500Q1.500 7 5 7Q6.500 1 12 1.500Q16 2.500 16.500 6.500Q20 8 19 13" fill="#999"/><circle cx="14.500" cy="13.500" r="6" fill="#fff" stroke="none"/><path d="M10.500 13A4 4 0 0 1 17.500 11M18.500 14A4 4 0 0 1 11.500 16M17.800 8.800V11.300H15.300M11.200 18.200V15.700H13.700" stroke="#1673c4"/>`,'#222',1.500)],
  [1636,30,`<div class="st c">${T('ENG',27)}${T('IN',13)}</div>`],
  [1688,20,svg(20,16,`<path d="M1 5.500A13 13 0 0 1 19 5.500M3.800 8.500A9 9 0 0 1 16.200 8.500M6.700 11.500A5 5 0 0 1 13.300 11.500"/><circle cx="10" cy="14" r="1.800" fill="#222" stroke="none"/>`,'#222',1.400)],
  [1718,21,svg(21,16,`<path d="M.7 5.500H4L8.500 1.500V14.500L4 10.500H.7ZM11 5.500Q12.800 8 11 10.500M13.500 3.200Q17 8 13.500 12.800M16 1Q21.500 8 16 15"/>`,'#222',1.300)],
  [1748,20,svg(20,16,`<rect x="2.500" y="4.500" width="14.500" height="10.500" rx="2" stroke-width="1.500"/><rect x="4.500" y="6.500" width="10.500" height="6.500" fill="#222" stroke="none"/><path d="M18.500 8V12" stroke-width="2"/><path d="M3.500 0L0 5.500H3L2 9L6 3.500H3.500Z" fill="#222" stroke="none"/>`,'#222',1.300)],
  [1786,81,`<div class="st r">${T('09:11 AM',62)}${T('07-10-2023',77)}</div>`],
  [1874,22,`<div class="bd">12</div>`]])}
});
def('tableau-desktop', class extends UI{
  css(){return `:host{display:flex;flex-direction:column;width:1920px;height:1080px}.m{display:flex;gap:6px;height:852px}.w{display:flex;flex-direction:column;gap:6px;width:1446px}.v{display:flex;gap:6px}`}
  html(){return `<title-bar></title-bar><menu-bar></menu-bar><tool-bar></tool-bar>
  <div class="m"><data-pane></data-pane><cards-column></cards-column>
  <div class="w"><field-shelf kind="c"></field-shelf><field-shelf kind="r"><field-pill label="Index no." w="64" mark="delta"></field-pill><field-pill label="Airport Name" w="95" mark="sort"></field-pill><field-pill label="City" w="28"></field-pill><field-pill label="ICAO Code" w="77"></field-pill></field-shelf>
  <div class="v"><crosstab-view></crosstab-view><filter-card></filter-card></div></div></div>
  <sheet-tabs></sheet-tabs><status-bar></status-bar><task-bar></task-bar>`}
});
</script>
</body>
</html>
